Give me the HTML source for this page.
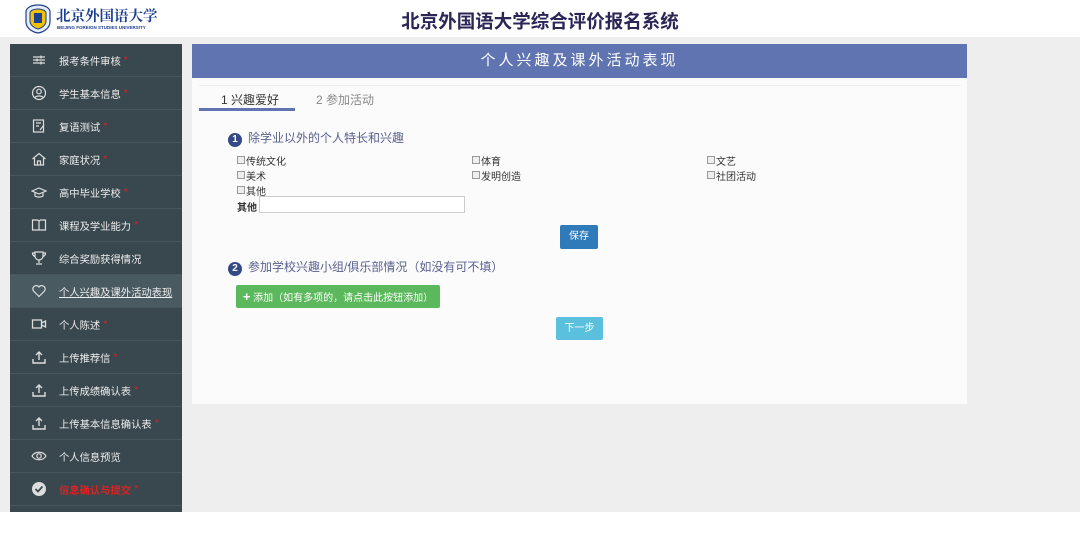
<!DOCTYPE html>
<html><head><meta charset="utf-8"><style>
*{margin:0;padding:0;box-sizing:border-box}
body{width:1080px;height:539px;background:#fff;font-family:"Liberation Sans","Noto Sans CJK SC",sans-serif;position:relative;overflow:hidden;font-size:11px}
.hdr{position:absolute;left:0;top:0;width:1080px;height:37px;background:#fff}
.gray{position:absolute;left:0;top:37px;width:1080px;height:475px;background:#eeeeee}
.title{position:absolute;left:0;width:1080px;top:8px;text-align:center;font-size:18.5px;font-weight:bold;color:#2b2656;font-family:"Noto Sans CJK SC",sans-serif}
.logo{position:absolute;left:25px;top:4px}
.logotxt{position:absolute;left:56px;top:5px;font-family:"Noto Serif CJK SC",serif;font-size:14.5px;color:#1d3f8f;font-weight:bold;letter-spacing:0}
.logosub{position:absolute;left:57px;top:25px;font-size:4.5px;color:#1d3f8f;font-weight:bold;white-space:nowrap}
.side{position:absolute;left:10px;top:44px;width:172px;height:468px;background:#39484e}
.it{height:33px;border-bottom:1px solid #46565c;color:#eee;font-size:10.3px;padding-left:49px;position:relative;white-space:nowrap;display:flex;align-items:center}
.it span.r{margin-left:3px}
.it.act{background:#4a5a61;text-decoration:underline}
.it .ic{position:absolute;left:21px;top:8px;width:16px;height:16px}
.r{color:#e02020}
.panel{position:absolute;left:192px;top:44px;width:775px;height:360px;background:#fbfbfb}
.pbar{height:34px;background:#5f74b1;color:#fff;text-align:center;font-size:15px;line-height:34px;letter-spacing:3px}
.tabs{position:absolute;left:7px;top:41px;width:762px;border-top:1px solid #eee}
.t1{position:absolute;left:22px;top:5px;font-size:12px;color:#333}
.t2{position:absolute;left:117px;top:5px;font-size:12px;color:#888}
.ul{position:absolute;left:0;top:22px;width:96px;height:3px;background:#5f74b1}
.num{display:inline-block;width:14px;height:14px;border-radius:50%;background:#344a86;color:#fff;font-size:10px;text-align:center;line-height:14px;font-weight:bold;margin-right:6px;vertical-align:0px}
.sec{position:absolute;font-size:12px;color:#5a6090}
.cb{position:absolute;font-size:10px;color:#333;white-space:nowrap}
.cb i{display:inline-block;width:8px;height:8px;border:1px solid #999;background:#eee;vertical-align:1px;margin-right:1px}
.btn{position:absolute;color:#fff;font-size:10px;text-align:center;border-radius:2px}
</style></head><body>
<div class="hdr"></div><div class="gray"></div>
<svg class="logo" width="26" height="30" viewBox="0 0 26 30"><path d="M13 1 C20 1 25 4 25 8 V18 C25 24 19 28 13 29 C7 28 1 24 1 18 V8 C1 4 6 1 13 1Z" fill="#e8eef8" stroke="#1d3f8f" stroke-width="1.2"/><path d="M13 5 C18 5 21 7 21 9 V17 C21 21 17 24 13 25 C9 24 5 21 5 17 V9 C5 7 8 5 13 5Z" fill="#f2c200" stroke="#1d3f8f"/><rect x="9" y="9" width="8" height="10" fill="#1d3f8f"/></svg>
<div class="logotxt">北京外国语大学</div>
<div class="logosub">BEIJING FOREIGN STUDIES UNIVERSITY</div>
<div class="title">北京外国语大学综合评价报名系统</div>
<div class="side">
<div class="it"><svg class="ic" viewBox="0 0 16 16" fill="none" stroke="#ddd" stroke-width="1.3"><path d="M2 5h12M2 8h12M2 11h12"/><path d="M10 3.5v3M6 6.5v3M10 9.5v3"/></svg>报考条件审核<span class="r">*</span></div>
<div class="it"><svg class="ic" viewBox="0 0 16 16" fill="none" stroke="#ddd" stroke-width="1.2"><circle cx="8" cy="8" r="6.5"/><circle cx="8" cy="6.5" r="2.3"/><path d="M4 12.5c1-2 7-2 8 0"/></svg>学生基本信息<span class="r">*</span></div>
<div class="it"><svg class="ic" viewBox="0 0 16 16" fill="none" stroke="#ddd" stroke-width="1.2"><rect x="2.5" y="2" width="10" height="12"/><path d="M5 5h5M5 8h3M9 12l4-5"/></svg>复语测试<span class="r">*</span></div>
<div class="it"><svg class="ic" viewBox="0 0 16 16" fill="none" stroke="#ddd" stroke-width="1.2"><path d="M1.5 8L8 2.5 14.5 8M3.5 7v7h9V7M6.5 14v-4h3v4"/></svg>家庭状况<span class="r">*</span></div>
<div class="it"><svg class="ic" viewBox="0 0 16 16" fill="none" stroke="#ddd" stroke-width="1.2"><path d="M1 7l7-3 7 3-7 3z M4 8.5v3.5c2 1.5 6 1.5 8 0V8.5"/></svg>高中毕业学校<span class="r">*</span></div>
<div class="it"><svg class="ic" viewBox="0 0 16 16" fill="none" stroke="#ddd" stroke-width="1.2"><path d="M1.5 3h5l1.5 1 1.5-1h5v10h-13z M8 4v9"/></svg>课程及学业能力<span class="r">*</span></div>
<div class="it"><svg class="ic" viewBox="0 0 16 16" fill="none" stroke="#ddd" stroke-width="1.2"><path d="M4 2h8v4a4 4 0 0 1-8 0z M4 3H1.5c0 2 1 3 2.5 3.5M12 3h2.5c0 2-1 3-2.5 3.5M8 10v3M5 14h6"/></svg>综合奖励获得情况</div>
<div class="it act"><svg class="ic" viewBox="0 0 16 16" fill="none" stroke="#ddd" stroke-width="1.2"><path d="M8 13.5L2.5 8A3 3 0 0 1 8 4a3 3 0 0 1 5.5 4z"/></svg>个人兴趣及课外活动表现</div>
<div class="it"><svg class="ic" viewBox="0 0 16 16" fill="none" stroke="#ddd" stroke-width="1.3"><rect x="1.5" y="4" width="9" height="8"/><path d="M10.5 7l4-2v6l-4-2"/></svg>个人陈述<span class="r">*</span></div>
<div class="it"><svg class="ic" viewBox="0 0 16 16" fill="none" stroke="#ddd" stroke-width="1.4"><path d="M8 11V3M5 6l3-3 3 3M2 10v4h12v-4"/></svg>上传推荐信<span class="r">*</span></div>
<div class="it"><svg class="ic" viewBox="0 0 16 16" fill="none" stroke="#ddd" stroke-width="1.4"><path d="M8 11V3M5 6l3-3 3 3M2 10v4h12v-4"/></svg>上传成绩确认表<span class="r">*</span></div>
<div class="it"><svg class="ic" viewBox="0 0 16 16" fill="none" stroke="#ddd" stroke-width="1.4"><path d="M8 11V3M5 6l3-3 3 3M2 10v4h12v-4"/></svg>上传基本信息确认表<span class="r">*</span></div>
<div class="it"><svg class="ic" viewBox="0 0 16 16" fill="none" stroke="#ddd" stroke-width="1.2"><path d="M1 8c3-5 11-5 14 0-3 5-11 5-14 0z"/><circle cx="8" cy="8" r="2.2"/></svg>个人信息预览</div>
<div class="it"><svg class="ic" viewBox="0 0 16 16"><circle cx="8" cy="8" r="7" fill="#ddd"/><path d="M4.5 8l2.5 2.5 4.5-5" fill="none" stroke="#39484e" stroke-width="1.8"/></svg><b class="r">信息确认与提交</b><span class="r">*</span></div>
</div>
<div class="panel">
<div class="pbar">个人兴趣及课外活动表现</div>
<div class="tabs"><span class="t1">1 兴趣爱好</span><span class="t2">2 参加活动</span><div class="ul"></div></div>
<div class="sec" style="left:36px;top:85px"><span class="num">1</span>除学业以外的个人特长和兴趣</div>
<div class="cb" style="left:45px;top:109px"><i></i>传统文化</div>
<div class="cb" style="left:45px;top:124px"><i></i>美术</div>
<div class="cb" style="left:45px;top:139px"><i></i>其他</div>
<div class="cb" style="left:280px;top:109px"><i></i>体育</div>
<div class="cb" style="left:280px;top:124px"><i></i>发明创造</div>
<div class="cb" style="left:515px;top:109px"><i></i>文艺</div>
<div class="cb" style="left:515px;top:124px"><i></i>社团活动</div>
<div class="cb" style="left:45px;top:155px;font-weight:bold">其他</div>
<div style="position:absolute;left:67px;top:152px;width:206px;height:17px;border:1px solid #ccc;background:#fff"></div>
<div class="btn" style="left:368px;top:181px;width:38px;height:24px;line-height:24px;background:#2f7ab9">保存</div>
<div class="sec" style="left:36px;top:214px"><span class="num">2</span>参加学校兴趣小组/俱乐部情况（如没有可不填）</div>
<div class="btn" style="left:44px;top:241px;width:204px;height:23px;line-height:23px;background:#5cb85c"><b style="font-size:13px">+</b> 添加（如有多项的，请点击此按钮添加）</div>
<div class="btn" style="left:364px;top:273px;width:47px;height:23px;line-height:23px;background:#5bc0de">下一步</div>
</div>
</body></html>
